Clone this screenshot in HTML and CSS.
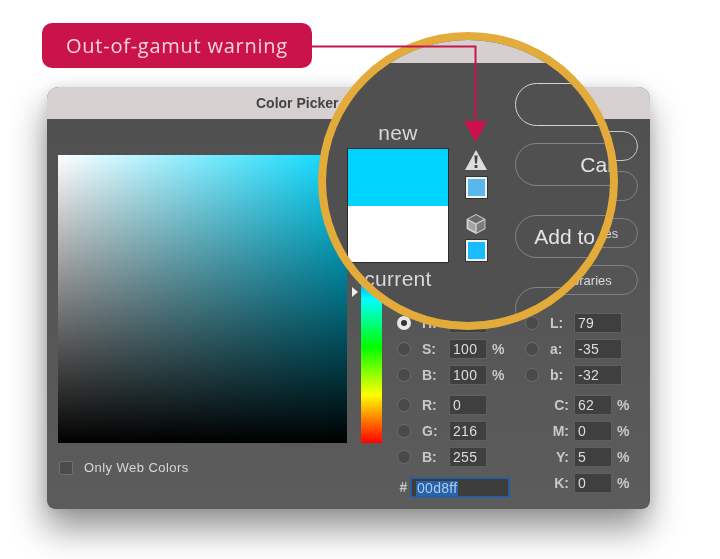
FILE: index.html
```html
<!DOCTYPE html>
<html lang="en">
<head>
  <meta charset="UTF-8">
  <meta name="viewport" content="width=device-width, initial-scale=1.0">
  <title>Color Picker</title>
  <link rel="stylesheet" href="styles.css">
</head>
<body>
  <div class="stage">
    <div class="callout">Out-of-gamut warning</div>

    <div class="window">
      <div class="titlebar">Color Picker</div>
      <div class="panel">
        <div class="leftcol">
          <div class="pickfield"></div>
          <label class="webonly"><span class="checkbox"></span>Only Web Colors</label>
        </div>
        <div class="huestrip"><span class="huemark"></span></div>
        <div class="rightcol">
          <div class="buttons">
            <div class="btn btn-main">OK</div>
            <div class="btn">Cancel</div>
            <div class="btn btn-far">Add to Swatches</div>
            <div class="btn btn-far">Color Libraries</div>
          </div>
          <div class="controls">
            <div class="group group-left">
              <div class="row"><span class="radio radio-on"></span><span class="lbl">H:</span><span class="val"></span></div>
              <div class="row"><span class="radio"></span><span class="lbl">S:</span><span class="val">100</span><span class="unit">%</span></div>
              <div class="row row-gap"><span class="radio"></span><span class="lbl">B:</span><span class="val">100</span><span class="unit">%</span></div>
              <div class="row"><span class="radio"></span><span class="lbl">R:</span><span class="val">0</span></div>
              <div class="row"><span class="radio"></span><span class="lbl">G:</span><span class="val">216</span></div>
              <div class="row"><span class="radio"></span><span class="lbl">B:</span><span class="val">255</span></div>
              <div class="row hexrow"><span class="hash">#</span><span class="hex"><span class="hexsel">00d8ff</span></span></div>
            </div>
            <div class="group group-right">
              <div class="row"><span class="radio"></span><span class="lbl">L:</span><span class="val val-wide">79</span></div>
              <div class="row"><span class="radio"></span><span class="lbl">a:</span><span class="val val-wide">-35</span></div>
              <div class="row row-gap"><span class="radio"></span><span class="lbl">b:</span><span class="val val-wide">-32</span></div>
              <div class="row"><span class="lbl lbl-cmyk">C:</span><span class="val">62</span><span class="unit">%</span></div>
              <div class="row"><span class="lbl lbl-cmyk">M:</span><span class="val">0</span><span class="unit">%</span></div>
              <div class="row"><span class="lbl lbl-cmyk">Y:</span><span class="val">5</span><span class="unit">%</span></div>
              <div class="row"><span class="lbl lbl-cmyk">K:</span><span class="val">0</span><span class="unit">%</span></div>
            </div>
          </div>
        </div>
      </div>
    </div>

    <!-- magnified part of the dialog -->
    <div class="lens">
      <div class="lens-title"></div>
      <div class="lens-body">
        <div class="preview">
          <div class="preview-lbl">new</div>
          <div class="preview-box">
            <div class="preview-new"></div>
            <div class="preview-cur"></div>
          </div>
          <div class="preview-lbl">current</div>
        </div>
        <div class="alerts">
          <svg class="icon-warn" width="22" height="20" viewBox="0 0 22 20">
            <path d="M11 0 L22 20 L0 20 Z" fill="#dedcdc"/>
            <path d="M9.4 5.5 H12.6 L12 13.5 H10 Z M9.6 15 H12.4 V18 H9.6 Z" fill="#444"/>
          </svg>
          <div class="chip chip-warn"></div>
          <svg class="icon-cube" width="20" height="20" viewBox="0 0 20 20">
            <path d="M10 1 L18.5 5.5 V14.5 L10 19 L1.5 14.5 V5.5 Z" fill="#a3a3a0" stroke="#d4d4d2" stroke-width="1.8"/>
            <path d="M1.5 5.5 L10 10 L18.5 5.5 L10 1 Z" fill="#6a6a6a"/>
            <path d="M10 10 L18.5 5.5 V14.5 L10 19 Z" fill="#7c7c7a"/>
            <path d="M1.5 5.5 L10 10 L18.5 5.5 M10 10 V19" fill="none" stroke="#d4d4d2" stroke-width="1.3"/>
          </svg>
          <div class="chip chip-web"></div>
        </div>
        <div class="lens-btns">
          <div class="pill pill-main">OK</div>
          <div class="pill">Cancel</div>
          <div class="pill pill-far">Add to Swatches</div>
          <div class="pill pill-far">Color Libraries</div>
        </div>
      </div>
    </div>

    <svg class="pointer" width="720" height="559" viewBox="0 0 720 559">
      <path d="M312 46.5 H475.5 V124" fill="none" stroke="#c4174f" stroke-width="2"/>
      <path d="M464 121 H487 L475.5 142 Z" fill="#cf0f4b"/>
    </svg>
  </div>
</body>
</html>
```

FILE: styles.css
```css
html, body{
  margin: 0;
  background-color: #fff;
}
.stage{
  position: relative;
  width: 720px;
  height: 559px;
  overflow: hidden;
  padding: 23px 0 0 42px;
  box-sizing: border-box;
  font-family: "Liberation Sans", Arial, sans-serif;
  filter: blur(0.45px);
}

/* callout */
.callout{
  display: flex;
  align-items: center;
  box-sizing: border-box;
  width: 270px;
  height: 45px;
  padding-left: 24px;
  background-color: #c9134a;
  border-radius: 10px;
  color: #f8d5de;
  font-family: "Open Sans", sans-serif;
  font-size: 20px;
  letter-spacing: 0.75px;
}
.pointer{
  position: absolute;
  top: 0;
  left: 0;
}

/* dialog */
.window{
  width: 603px;
  margin: 19px 0 0 5px;
  border-radius: 12px 12px 8px 8px;
  background: linear-gradient(#4f4f4f, #5c5c5c);
  box-shadow: -2px 20px 34px rgba(0,0,0,0.42), 0 0 14px rgba(0,0,0,0.1);
  color: #d8d8d8;
}
.titlebar{
  height: 32px;
  line-height: 32px;
  padding-left: 209px;
  background-color: #d6d0d1;
  border-radius: 12px 12px 0 0;
  color: #444;
  font-size: 14px;
  font-weight: bold;
}
.panel{
  display: flex;
  padding: 12px 12px 13px 11px;
}
.leftcol{
  width: 289px;
  padding-top: 24px;
}
.pickfield{
  height: 288px;
  background:
    linear-gradient(rgba(0,0,0,0), #000),
    linear-gradient(90deg, #fff, #00d8ff);
}
.webonly{
  display: flex;
  align-items: center;
  gap: 11px;
  margin: 17px 0 0 1px;
  font-size: 13px;
  letter-spacing: 0.45px;
}
.checkbox{
  width: 12px;
  height: 12px;
  background-color: #4b4b4b;
  border: 1px solid #707070;
  border-radius: 2px;
}
.huestrip{
  position: relative;
  width: 21px;
  height: 288px;
  margin: 24px 0 0 14px;
  background: linear-gradient(#f00, #f0f 16.66%, #00f 33.33%, #0ff 50%, #0f0 66.66%, #ff0 83.33%, #f00);
}
.huemark{
  position: absolute;
  top: 132px;
  left: -9px;
  border-left: 6px solid #eee;
  border-top: 5px solid transparent;
  border-bottom: 5px solid transparent;
}
.rightcol{
  width: 241px;
  margin-left: 15px;
}
.buttons{
  display: flex;
  flex-direction: column;
  align-items: flex-end;
}
.btn{
  display: flex;
  align-items: center;
  justify-content: center;
  box-sizing: border-box;
  width: 137px;
  height: 30px;
  margin-top: 10px;
  border: 1.5px solid #808080;
  border-radius: 15px;
  font-size: 13px;
}
.btn-main{
  margin-top: 0;
  border-color: #c8c8c8;
}
.btn-far{
  margin-top: 17px;
}
.controls{
  display: flex;
  margin-top: 15px;
  font-size: 14px;
}
.group-left{
  width: 128px;
}
.row{
  display: flex;
  align-items: center;
  height: 26px;
}
.row-gap{
  margin-bottom: 4px;
}
.radio{
  box-sizing: border-box;
  width: 14px;
  height: 14px;
  margin-right: 11px;
  background-color: #4a4a4a;
  border: 1.5px solid #6c6c6c;
  border-radius: 50%;
}
.radio-on{
  background-color: #333;
  border: 4px solid #e8e8e8;
}
.lbl{
  width: 27px;
  color: #c8c8c8;
  font-weight: bold;
}
.group-right .lbl{
  width: 24px;
}
.group-right .lbl-cmyk{
  width: 44px;
  margin-right: 5px;
  text-align: right;
}
.val{
  box-sizing: border-box;
  width: 38px;
  height: 20px;
  padding: 0 3px;
  line-height: 18px;
  background-color: #3f3f3f;
  border: 1px solid #5f5f5f;
  color: #ddd;
  letter-spacing: 0.3px;
}
.val-wide{
  width: 48px;
}
.unit{
  margin-left: 5px;
  color: #c8c8c8;
  font-weight: bold;
}
.hexrow{
  align-items: flex-end;
  height: 28px;
  margin-bottom: -2px;
}
.hash{
  width: 13px;
  line-height: 21px;
  font-weight: bold;
  color: #c8c8c8;
  text-align: center;
}
.hex{
  display: block;
  box-sizing: border-box;
  width: 100px;
  height: 21px;
  padding: 2px 4px;
  line-height: 15px;
  background-color: #3d3d3d;
  border: 2px solid #2b5d9e;
}
.hexsel{
  display: inline-block;
  padding: 0 1px;
  background-color: #2a62a8;
  color: #a9cdf2;
  letter-spacing: 0.3px;
}

/* lens */
.lens{
  position: absolute;
  top: 32px;
  left: 318px;
  box-sizing: border-box;
  width: 300px;
  height: 298px;
  overflow: hidden;
  background-color: #505050;
  border: 8px solid #e2ab3a;
  border-radius: 50%;
  color: #e4e4e4;
}
.lens-title{
  height: 23px;
  background-color: #d6cfd0;
}
.lens-body{
  display: flex;
  padding-left: 21px;
}
.preview{
  flex: none;
  width: 102px;
  padding-top: 58px;
}
.preview-lbl{
  height: 24px;
  line-height: 24px;
  color: #d8d8d8;
  font-size: 21px;
  letter-spacing: 0.3px;
  text-align: center;
}
.preview-box{
  box-sizing: border-box;
  height: 115px;
  margin: 3px 0 4px;
  border: 1px solid #2c2c2c;
}
.preview-new{
  height: 57px;
  background-color: #00d3ff;
}
.preview-cur{
  height: 56px;
  background-color: #fff;
}
.alerts{
  flex: none;
  display: flex;
  flex-direction: column;
  align-items: center;
  width: 22px;
  margin-left: 16px;
  padding-top: 87px;
}
.chip{
  box-sizing: border-box;
  width: 21px;
  height: 21px;
  border: 2px solid #f2f2f2;
  outline: 1px solid #333;
}
.chip-warn{
  margin-top: 7px;
  background-color: #5ab7ee;
}
.icon-cube{
  margin-top: 16px;
}
.chip-web{
  margin-top: 6px;
  background-color: #18bdff;
}
.lens-btns{
  flex: none;
  width: 196px;
  margin-left: 28px;
  padding-top: 20px;
}
.pill{
  display: flex;
  align-items: center;
  justify-content: center;
  box-sizing: border-box;
  height: 43px;
  margin-top: 17px;
  border: 1.5px solid #858585;
  border-radius: 22px;
  font-size: 21px;
}
.pill-main{
  margin-top: 0;
  border-color: #d4d4d4;
}
.pill-far{
  margin-top: 29px;
}
```
